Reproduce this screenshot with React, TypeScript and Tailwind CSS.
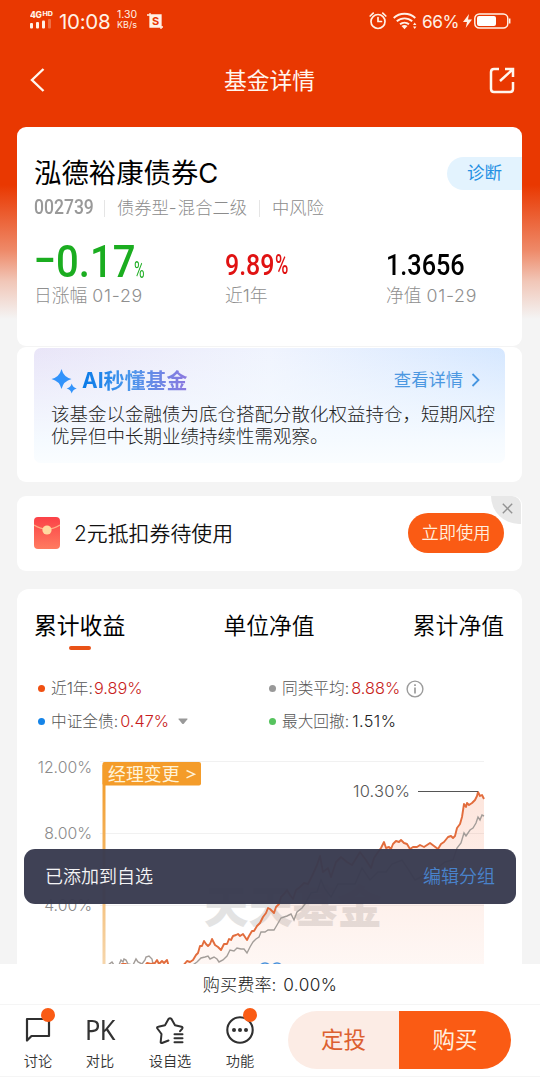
import React from "react";

const returns: [number, number][] = [
  [108, 966], [119, 967], [122, 964], [126, 964], [128, 967], [144, 967], [147, 963], [151, 964], [155, 963], [157, 960], [159, 964], [162, 961], [164, 963], [167, 960], [169, 967], [182, 967],
  [187, 961], [190, 962], [193, 960], [196, 955], [198, 953], [200, 946], [202, 946], [204, 941], [206, 944], [208, 946], [210, 944], [212, 939], [215, 945], [218, 947], [221, 950], [224, 944], [227, 944],
  [229, 939], [231, 940], [233, 936], [236, 935], [238, 934], [240, 936], [243, 934], [245, 937], [247, 940], [249, 936], [252, 931], [254, 931], [257, 926], [260, 923], [263, 917], [266, 913], [268, 908], [270, 909], [274, 913],
  [276, 907], [279, 904], [281, 897], [284, 894], [287, 890], [290, 895], [293, 899], [296, 890], [300, 887], [304, 883], [308, 884], [312, 876], [317, 865], [320, 856], [323, 872], [328, 868], [331, 877],
  [336, 862], [341, 857], [347, 862], [352, 865], [360, 852], [366, 860], [371, 868], [374, 858], [378, 852], [381, 848], [384, 842], [386, 848], [389, 847], [391, 849], [393, 844], [396, 841], [399, 842], [401, 840], [404, 843], [407, 844], [410, 849],
  [413, 847], [417, 847], [420, 845], [424, 847], [427, 845], [430, 843], [434, 846], [438, 849], [441, 844], [444, 842], [448, 837], [451, 836], [453, 838], [455, 836], [457, 828], [460, 824], [462, 817], [464, 804], [466, 807], [467, 803], [469, 805], [472, 803], [475, 800], [477, 796], [478, 792], [480, 796], [482, 795], [484, 799],
];

const peers: [number, number][] = [
  [108, 965], [112, 962], [114, 965], [119, 965], [121, 960], [123, 962], [124, 959], [126, 960], [128, 964], [133, 965], [136, 959], [138, 962], [142, 964], [145, 960], [146, 957], [149, 956], [152, 959], [153, 964], [156, 967], [190, 967],
  [197, 962], [201, 958], [205, 957], [208, 956], [210, 959], [214, 957], [217, 959], [219, 962], [223, 960], [227, 956], [230, 950], [234, 951], [237, 948], [241, 949], [244, 949], [247, 953], [250, 947], [253, 942], [256, 939], [259, 937], [261, 932], [265, 932], [268, 930], [274, 930],
  [277, 925], [281, 918], [284, 917], [287, 916], [291, 914], [294, 920], [297, 912], [302, 908], [305, 904], [311, 893], [317, 892], [321, 880], [325, 889], [331, 897], [338, 884], [345, 884], [355, 884], [362, 868],
  [370, 880], [378, 872], [386, 872], [392, 864], [402, 860], [408, 869], [415, 880], [425, 875], [435, 870], [445, 862], [453, 860], [457, 848], [461, 843], [464, 833], [466, 836], [470, 830], [473, 828], [476, 823], [478, 817], [480, 820], [482, 815], [484, 816],
];

const path = (pts: [number, number][]) => pts.map((p, i) => `${i ? "L" : "M"}${p[0]} ${p[1]}`).join("");

function StatusBar() {
  return (
    <div className="flex h-[40px] shrink-0 items-center pt-[3px] pl-[30px] pr-[29px] text-[#fff1e6]">
      <svg width="24" height="20" viewBox="0 0 24 20" fill="currentColor" className="-mt-[3px]">
        <text x="0" y="8" fontSize="8.5" fontWeight="800" fontFamily="Inter, sans-serif" textLength="12">4G</text>
        <text x="12.5" y="5.5" fontSize="6" fontWeight="800" fontFamily="Inter, sans-serif" textLength="10.5" lengthAdjust="spacingAndGlyphs">HD</text>
        <rect x="0" y="13" width="3" height="5.500" rx="1" />
        <rect x="6" y="12" width="3" height="6.500" rx="1" />
        <rect x="12" y="10.500" width="3" height="8" rx="1" />
        <rect x="18" y="9" width="3" height="9.500" rx="1" opacity=".3" />
      </svg>
      <span className="ml-[5px] mt-[1px] w-[53px] whitespace-nowrap text-[20.500px] leading-6 tracking-[-0.3px]">10:08</span>
      <div className="ml-[5px] -mt-[3px] w-[24px] whitespace-nowrap text-[10.500px] leading-[10px]">
        <div>1.30</div>
        <div className="text-[9px]">KB/s</div>
      </div>
      <svg width="17" height="17" viewBox="0 0 17 17" className="-mt-[1px] ml-[6px]" fill="none" stroke="currentColor">
        <path d="M3 0v14h13M0 2h14v14" strokeWidth="1.300" />
        <rect x="3" y="2" width="11" height="12" fill="currentColor" stroke="none" />
        <text x="5" y="12" fontSize="11" fontWeight="700" fontFamily="Inter, sans-serif" fill="#e93801" stroke="none">S</text>
      </svg>
      <svg width="18" height="18" viewBox="0 0 18 18" className="-mt-[1px] ml-auto" fill="none" stroke="currentColor" strokeWidth="1.700" strokeLinecap="round">
        <circle cx="9" cy="9.500" r="7" />
        <path d="M9 5.500v4h3.500M1.200 4l3-2.800M16.800 4l-3-2.800" />
      </svg>
      <svg width="24" height="18" viewBox="0 0 24 18" className="-mt-[1px] ml-[6px]" fill="none" stroke="currentColor" strokeWidth="1.900">
        <path d="M.7 6a16 16 0 0 1 21.600 0M3.800 9.300a11.500 11.500 0 0 1 15.400 0M7 12.300a7 7 0 0 1 9 0" />
        <path d="M8.500 14q3-2 6 0l-3 3.300z" fill="currentColor" stroke="none" />
        <path d="M20 13l1.700-2.500 1.700 2.500zM20 14.500l1.700 2.500 1.700-2.500z" fill="currentColor" stroke="none" />
      </svg>
      <span className="ml-[5px] w-[39px] whitespace-nowrap text-[17.300px] leading-6 tracking-[-0.5px]">66%</span>
      <svg width="9" height="14" viewBox="0 0 9 14" className="-mt-[2px] ml-[2px]" fill="currentColor"><path d="M6 0L0 8h4L2.700 14 9 5.500H5z" /></svg>
      <svg width="37" height="16" viewBox="0 0 37 16" className="-mt-[2px] ml-[2px]" fill="none" stroke="currentColor">
        <rect x=".8" y="1" width="33" height="14" rx="4.500" strokeWidth="1.500" />
        <rect x="3" y="3" width="19" height="10" rx="2" fill="#fff" stroke="none" />
        <path d="M35.700 5.500v5" strokeWidth="1.500" />
      </svg>
    </div>
  );
}

function NavBar() {
  return (
    <div className="flex h-[87px] shrink-0 items-start justify-between pl-[29px] pr-[25px] pt-[26px] text-[#fff6ee]">
      <svg width="20" height="28" viewBox="0 0 20 28" fill="none" stroke="currentColor" strokeWidth="2.400"><path d="M14.500 3L3 14l11.500 11" /></svg>
      <h1 className="ml-[1px] text-[22.800px] font-normal leading-[30px]">基金详情</h1>
      <svg width="26" height="28" viewBox="0 0 26 28" fill="none" stroke="currentColor" strokeWidth="2.500"><path d="M10 3H5Q2 3 2 6v17q0 3 3 3h16q3 0 3-3v-7M11 15L23 4M16 3h8v8" /></svg>
    </div>
  );
}

function SummaryCard() {
  return (
    <section className="flex h-[219px] shrink-0 flex-col rounded-[9px] bg-white pl-[17px] pt-[29px]">
      <div className="flex items-center justify-between">
        <h2 className="text-[27.400px] leading-[34px] text-black">泓德裕康债券C</h2>
        <div className="flex h-[33px] w-[75px] items-center rounded-l-full bg-[#e3f3fe] pl-[20px] text-[17.500px] text-[#2590e3]">诊断</div>
      </div>
      <div className="mt-[6px] flex h-[24px] items-center text-[17.300px] font-light text-[#8c8c8c]">
        <div className="w-[60px]"><span className="inline-block origin-left scale-x-[0.9] font-['Roboto'] text-[19.500px] font-medium leading-6 text-[#999]">002739</span></div>
        <i className="ml-[10px] mr-[12px] h-[17px] w-px bg-[#e5e5e5]" />
        <span className="w-[131px] whitespace-nowrap">债券型<span className="inline-block w-[9px]">-</span>混合二级</span>
        <i className="ml-[11px] mr-[12px] h-[17px] w-px bg-[#e5e5e5]" />
        <span>中风险</span>
      </div>
      <div className="mt-[16px] flex text-[17.800px] font-light leading-[22px] text-[#8f8f8f]">
        <div className="w-[191px]">
          <div className="flex h-[50px] items-end whitespace-nowrap font-['Roboto'] text-[#1bad20]">
            <span className="flex w-[100px]">
              <span className="block w-[22px] shrink-0"><span className="inline-block origin-left scale-x-[0.76] text-[44px] font-medium leading-[47px]">–</span></span>
              <span className="inline-block origin-left scale-x-[0.89] text-[45px] font-medium leading-[48px]">0.17</span>
            </span>
            <span className="inline-block origin-left scale-x-[0.6] text-[24px] font-normal leading-[32px]">%</span>
          </div>
          <div className="-mt-[1px]">日涨幅 <span className="tracking-[0.7px]">01-29</span></div>
        </div>
        <div className="w-[161px]">
          <div className="flex h-[50px] items-end whitespace-nowrap font-['Roboto'] text-[#e01212]">
            <span className="w-[50px]"><span className="inline-block origin-left scale-x-[0.86] text-[29px] font-medium leading-[42px]">9.89</span></span>
            <span className="inline-block origin-left scale-x-[0.65] text-[28px] font-medium leading-[42px]">%</span>
          </div>
          <div className="-mt-[1px]">近1年</div>
        </div>
        <div>
          <div className="flex h-[50px] items-end whitespace-nowrap font-['Roboto'] text-black">
            <span className="inline-block origin-left scale-x-[0.87] text-[29px] font-medium leading-[42px]">1.3656</span>
          </div>
          <div className="-mt-[1px]">净值 <span className="tracking-[0.7px]">01-29</span></div>
        </div>
      </div>
    </section>
  );
}

function InsightCard() {
  return (
    <section className="mt-px h-[135px] shrink-0 rounded-[9px] bg-white px-[17px] pt-px">
      <div className="h-[115px] rounded-[7px] bg-[linear-gradient(180deg,transparent_0%,#f5faff_80%,#fafdff_100%),linear-gradient(90deg,#e9e5f8_0%,#f0f4fe_50%,#d5e7ff_100%)] pl-[17px] pt-[20px]">
        <div className="flex h-[26px] items-center">
          <svg width="27" height="26" viewBox="0 0 27 26" fill="#3293fb"><path d="M10.500 1Q12.500 9 20.500 11 12.500 13 10.500 21 8.500 13 .5 11 8.500 9 10.500 1ZM20.700 15.500q1 4 5 5-4 1-5 5-1-4-5-5 4-1 5-5Z" /></svg>
          <b className="ml-[4px] bg-[linear-gradient(90deg,#087ae8,#4b97ec_45%,#8d78df)] bg-clip-text text-[21px] font-bold leading-[26px] text-transparent">AI秒懂基金</b>
          <span className="-mt-[2px] ml-auto text-[17.300px] text-[#4d98e1]">查看详情</span>
          <svg width="10" height="14" viewBox="0 0 10 14" className="-mt-[2px] ml-[8px] mr-[24px]" fill="none" stroke="#4595e0" strokeWidth="1.800"><path d="M1.500 1l6 6-6 6" /></svg>
        </div>
        <p className="mt-[9px] whitespace-nowrap text-[18.500px] font-light leading-[22px] text-[#222]">该基金以金融债为底仓搭配分散化权益持仓，短期风控<br />优异但中长期业绩持续性需观察。</p>
      </div>
    </section>
  );
}

function CouponCard() {
  return (
    <section className="relative mt-[14px] flex h-[75px] shrink-0 items-center rounded-[9px] bg-white pl-[17px] pr-[18px]">
      <svg width="26" height="32" viewBox="0 0 26 32" className="-mt-[2px]">
        <defs><linearGradient id="env" x2="0" y2="1"><stop stopColor="#fb4147" /><stop offset="1" stopColor="#ff7b60" /></linearGradient></defs>
        <rect width="26" height="32" rx="4" fill="url(#env)" />
        <path d="M0 8q13 8 26 0" fill="none" stroke="#ffaf85" strokeWidth="1.300" />
        <circle cx="13" cy="13" r="4.600" fill="#ffdaa0" />
      </svg>
      <span className="ml-[14px] text-[20.900px] font-[350] leading-[28px] text-[#111]">2元抵扣券待使用</span>
      <button className="-mt-px ml-auto h-[40px] w-[96px] rounded-full bg-[#fa5b14] text-[17.300px] font-[350] text-[#ffeede]">立即使用</button>
      <div className="absolute right-px top-0 flex h-[28px] w-[30px] items-center justify-center rounded-bl-[28px] rounded-tr-[9px] bg-[#e8e8e8] pb-[4px] pl-[3px]">
        <svg width="11" height="11" viewBox="0 0 11 11" stroke="#929292" strokeWidth="1.400"><path d="M.8.800l9.400 9.400M10.200.8L.8 10.200" /></svg>
      </div>
    </section>
  );
}

function Dot({ className }: { className: string }) {
  return <i className={`mr-[6px] h-[7px] w-[7px] rounded-full ${className}`} />;
}

function ChartCard() {
  return (
    <section className="mt-[18px] flex h-[375px] shrink-0 flex-col overflow-hidden rounded-t-[12px] bg-white">
      <div className="flex h-[66px] justify-between pl-[17px] pr-[18px] pt-[22px] text-[22.800px] font-[350] leading-[30px] text-black">
        <div className="flex flex-col items-center font-normal">累计收益<i className="mt-[5px] h-[4px] w-[22px] rounded-full bg-[#e95217]" /></div>
        <div>单位净值</div>
        <div>累计净值</div>
      </div>
      <div className="grid h-[90px] grid-cols-[231px_1fr] grid-rows-[33px_33px] pl-[21px] pt-[17px] text-[15.700px] font-light text-[#555]">
        <div className="flex items-center"><Dot className="bg-[#f05012]" />近1年:<span className="ml-px text-[16.300px] text-[#c81c20]">9.89%</span></div>
        <div className="flex items-center"><Dot className="bg-[#999]" />同类平均:<span className="ml-[2px] text-[16.300px] text-[#c81c20]">8.88%</span>
          <svg width="18" height="18" viewBox="0 0 18 18" className="ml-[6px]" fill="none" stroke="#9b9b9b" strokeWidth="1.400"><circle cx="9" cy="9" r="7.900" /><path d="M9 7.500v6M9 4.300v1.800" strokeWidth="1.700" /></svg>
        </div>
        <div className="flex items-center"><Dot className="bg-[#1584e8]" />中证全债:<span className="ml-[2px] text-[16.300px] text-[#c81c20]">0.47%</span>
          <svg width="10" height="7" viewBox="0 0 10 7" className="ml-[9px]"><path d="M1 .5h8q1 0 .4.800L6 5.500q-1 1-2 0L.6 1.300Q0 .5 1 .5Z" fill="#999" /></svg>
        </div>
        <div className="flex items-center"><Dot className="bg-[#56c35e]" />最大回撤:<span className="ml-[3px] text-[16.300px] tracking-[0.4px] text-[#222]">1.51%</span></div>
      </div>
      <svg width="505" height="219" viewBox="17 745 505 219" className="block shrink-0">
        <defs>
          <linearGradient id="area" gradientUnits="userSpaceOnUse" x1="0" y1="790" x2="0" y2="964"><stop stopColor="#f25d25" stopOpacity=".16" /><stop offset="1" stopColor="#f25d25" stopOpacity=".05" /></linearGradient>
          <linearGradient id="flag" gradientUnits="userSpaceOnUse" x1="0" y1="780" x2="0" y2="964"><stop stopColor="#f29d2d" /><stop offset="1" stopColor="#f6d6ac" /></linearGradient>
        </defs>
        <path d="M100 761.500H484M100 833.500H484M100 905.500H484" stroke="#f1f1f1" />
        <g fontSize="15.800" fontWeight="300" fill="#8b8b8b" textAnchor="end">
          <text x="92" y="773">12.00%</text>
          <text x="92" y="838.500">8.00%</text>
          <text x="92" y="911">4.00%</text>
        </g>
        <text x="204" y="923" fontSize="44.500" fontWeight="900" fill="#e3e3e3">天天基金</text>
        <path d={`${path(returns)}V970H108Z`} fill="url(#area)" />
        <path d={path(peers)} fill="none" stroke="#a39d99" strokeWidth="1.400" />
        <path d={path(returns)} fill="none" stroke="#e26c3c" strokeWidth="1.900" strokeLinejoin="round" />
        <g fill="none" stroke="#4a92dc" strokeWidth="1.500"><circle cx="265" cy="969" r="6" /><circle cx="277" cy="968.500" r="5.500" /></g>
        <path d="M418 791.500H478" stroke="#555" strokeWidth="1.200" />
        <text x="353" y="797" fontSize="16.500" fontWeight="300" fill="#555" textLength="57">10.30%</text>
        <rect x="102.500" y="765" width="3" height="199" fill="url(#flag)" />
        <rect x="102.500" y="762" width="98.500" height="23.500" rx="2" fill="#f49c2a" />
        <text x="108" y="781" fontSize="17.900" fill="#fff3d8">经理变更</text>
        <path d="M186.500 770.500l8 3.700-8 3.700" fill="none" stroke="#fff3d8" strokeWidth="1.400" />
      </svg>
    </section>
  );
}

function Tab({ label, badge, children }: { label: string; badge?: boolean; children: React.ReactNode }) {
  return (
    <div className="relative flex flex-col items-center">
      <div className="flex h-[32px] items-center justify-center">{children}</div>
      <span className="mt-[5px] whitespace-nowrap text-[14.200px] font-[350] leading-5 text-[#333]">{label}</span>
      {badge && <i className="absolute left-1/2 -top-[6px] ml-[3px] h-[14px] w-[14px] rounded-full bg-[#fa5b14]" />}
    </div>
  );
}

function BottomBar() {
  return (
    <footer className="flex h-[113px] shrink-0 flex-col bg-white">
      <div className="h-[40px] text-center text-[17.200px] font-light leading-[41px] text-[#222]">购买费率: <span className="ml-[2px] tracking-[0.4px]">0.00%</span></div>
      <div className="flex flex-1 border-b border-t border-[#f5f5f5] pr-[29px] pt-[6px]">
        <div className="grid w-[288px] grid-cols-[76px_48px_92px_48px] pt-[3px]">
          <Tab label="讨论" badge>
            <svg width="26" height="26" viewBox="0 0 26 26" fill="none" stroke="#303030" strokeWidth="2.200" strokeLinejoin="round"><path d="M2 2h22v17H6.500L2 23.500Z" /></svg>
          </Tab>
          <Tab label="对比">
            <span className="inline-block scale-x-[0.94] font-['Noto_Sans'] text-[27px] leading-8 tracking-[-0.5px] text-[#333]">PK</span>
          </Tab>
          <Tab label="设自选">
            <svg width="28" height="27" viewBox="0 0 28 27" fill="none" stroke="#303030" strokeWidth="2" strokeLinecap="round" strokeLinejoin="round"><path d="M12.500 23.500L6 26q-1.500.3-1.300-1.200L5.500 17 1.400 11.500Q.5 10 2.300 9.700L9 8.300 12.500 2Q14 .5 15.500 2L19 8.300l6.500 1.500q1.700.5.600 2l-2 2.400M18.500 17.200h8M18.500 21.200h8M18.500 25.200h8" /></svg>
          </Tab>
          <Tab label="功能" badge>
            <svg width="28" height="28" viewBox="0 0 28 28" fill="#303030"><circle cx="14" cy="14" r="12.700" fill="none" stroke="#303030" strokeWidth="2.100" /><circle cx="8" cy="14" r="2" /><circle cx="14" cy="14" r="2" /><circle cx="20" cy="14" r="2" /></svg>
          </Tab>
        </div>
        <div className="flex h-[58px] flex-1 overflow-hidden rounded-full text-[22.500px]">
          <button className="w-[111px] bg-[#fcece5] text-[#dc6030]">定投</button>
          <button className="flex-1 bg-[#fa5b14] text-[#ffeede]">购买</button>
        </div>
      </div>
    </footer>
  );
}

export default function App() {
  return (
    <div className="relative flex h-[1077px] w-[540px] flex-col overflow-hidden bg-[#f4f4f4] bg-[linear-gradient(180deg,#e93801_0px,#e93801_185px,#ee8968_250px,#f1c6b7_281px,#f4f4f4_319px)] font-['Inter','Noto_Sans_CJK_SC',sans-serif]">
      <StatusBar />
      <NavBar />
      <main className="flex h-[837px] shrink-0 flex-col pl-[17px] pr-[18px]">
        <SummaryCard />
        <InsightCard />
        <CouponCard />
        <ChartCard />
      </main>
      <BottomBar />
      <div className="absolute left-[24px] top-[849px] flex h-[55px] w-[492px] items-center justify-between rounded-[11px] bg-[#393b50]/97 px-[21px] text-[18px] font-[350]">
        <span className="text-[#f4f4f6]">已添加到自选</span>
        <span className="text-[#4983cc]">编辑分组</span>
      </div>
    </div>
  );
}
